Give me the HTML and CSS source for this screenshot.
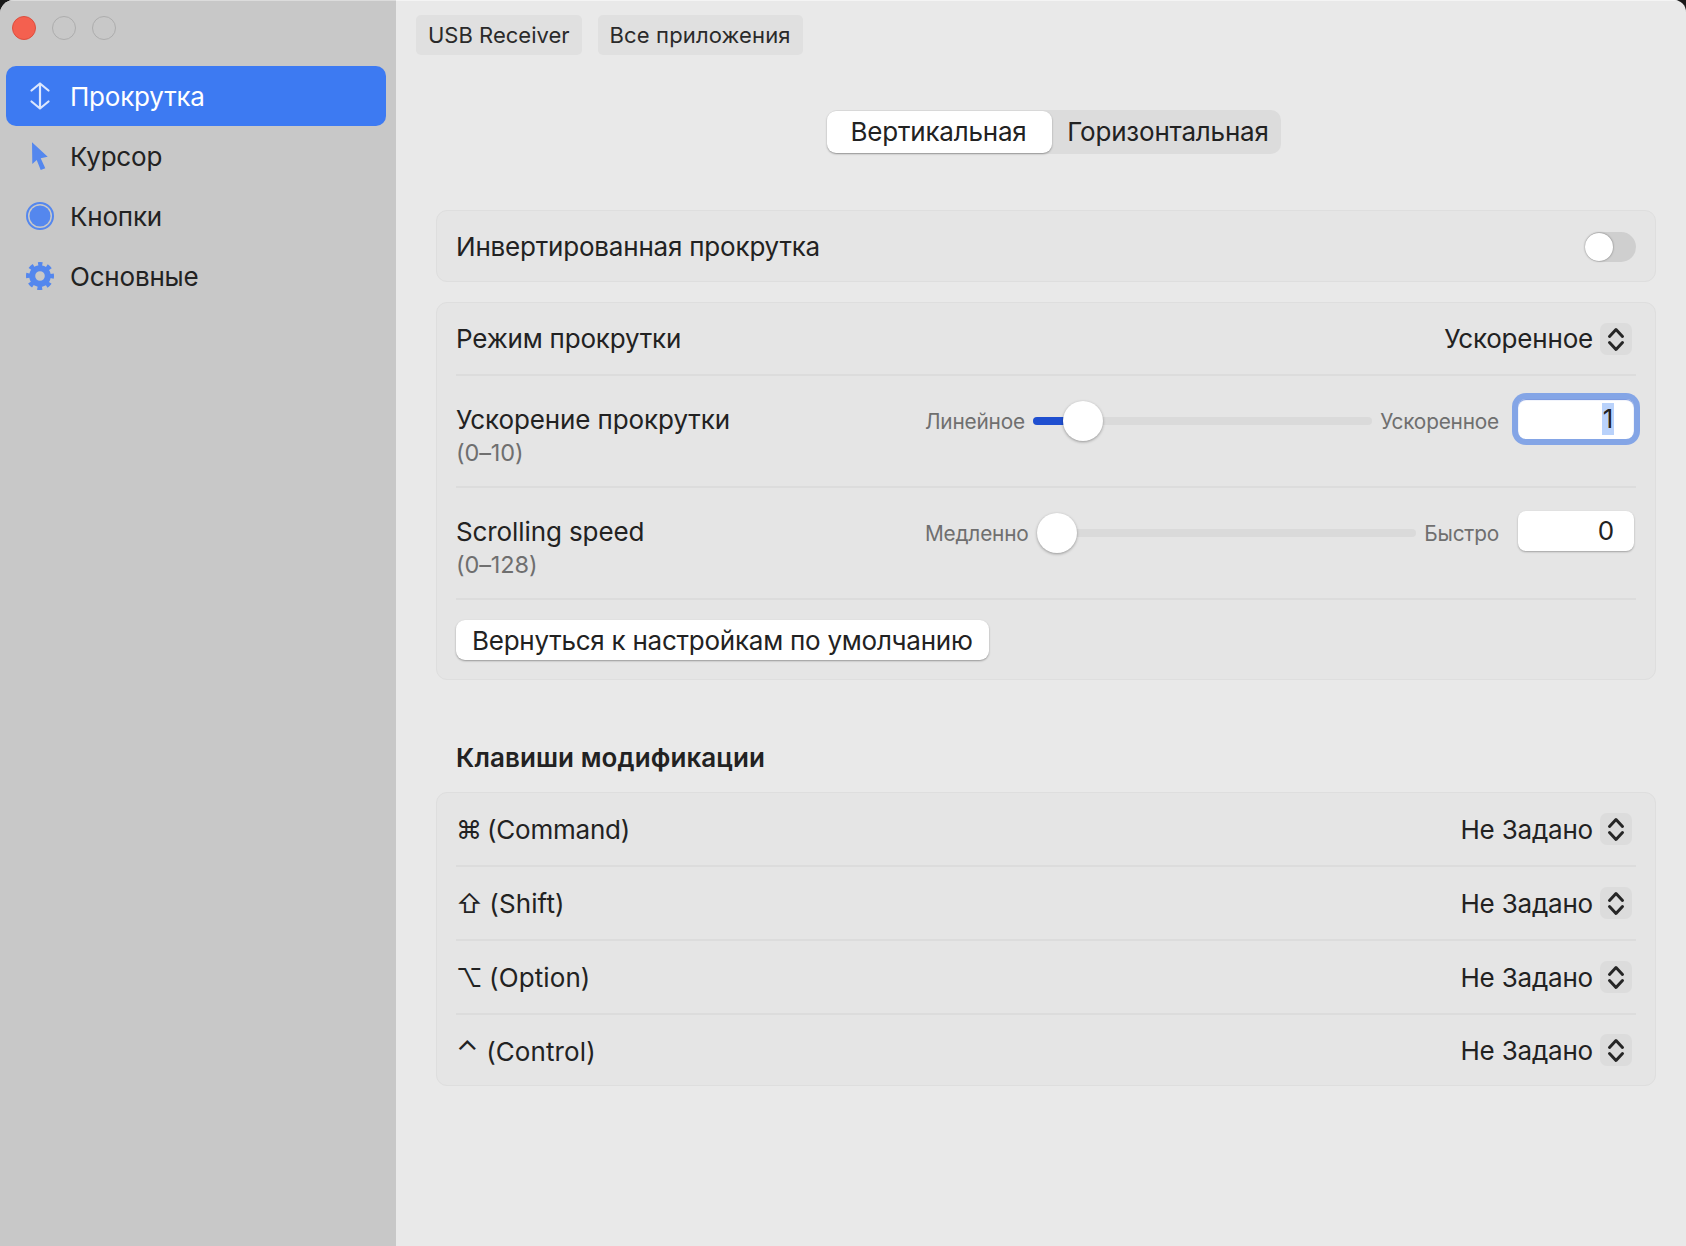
FILE: index.html
```html
<!DOCTYPE html>
<html lang="ru">
<head>
    <meta charset="UTF-8">
    <title>Настройки мыши</title>
    <link rel="stylesheet" href="styles.css">
</head>
<body>
    <div class="window">
        <aside class="sidebar">
            <div class="traffic">
                <span class="light light-close"></span>
                <span class="light"></span>
                <span class="light"></span>
            </div>
            <nav class="nav">
                <a class="nav-item active">
                    <svg class="nav-icon" viewBox="0 0 28 28" fill="none" stroke="#dbe6fd" stroke-width="2.2" stroke-linecap="round" stroke-linejoin="round">
                        <path d="M14 1.500v25M5.500 8.500 14 1.500 22.500 8.500M5.500 19.500l8.500 7 8.500-7"/>
                    </svg>
                    Прокрутка
                </a>
                <a class="nav-item">
                    <svg class="nav-icon" viewBox="0 0 28 28" fill="#5487ee">
                        <path d="M6 .3 21.700 14.700 14.700 16.300 19.300 26.300 14.700 28 10.700 18 6.300 22z"/>
                    </svg>
                    Курсор
                </a>
                <a class="nav-item">
                    <svg class="nav-icon" viewBox="0 0 28 28">
                        <circle cx="14" cy="14" r="13" fill="none" stroke="#5487ee" stroke-width="2"/>
                        <circle cx="14" cy="14" r="10.500" fill="#5487ee"/>
                    </svg>
                    Кнопки
                </a>
                <a class="nav-item">
                    <svg class="nav-icon" viewBox="0 0 28 28" fill="none" stroke="#5487ee">
                        <circle cx="14" cy="14" r="7.800" stroke-width="6"/>
                        <circle cx="14" cy="14" r="11.500" stroke-width="5" stroke-dasharray="4.600 4.432" stroke-dashoffset="2.300" transform="rotate(-90 14 14)"/>
                    </svg>
                    Основные
                </a>
            </nav>
        </aside>

        <main class="main">
            <div class="tabs">
                <button class="tab">USB Receiver</button>
                <button class="tab">Все приложения</button>
            </div>

            <div class="segmented">
                <span class="segment selected">Вертикальная</span>
                <span class="segment">Горизонтальная</span>
            </div>

            <section class="card first-card">
                <div class="row">
                    <span>Инвертированная прокрутка</span>
                    <span class="toggle"><span class="toggle-knob"></span></span>
                </div>
            </section>

            <section class="card">
                <div class="row">
                    <span>Режим прокрутки</span>
                    <div class="select">
                        Ускоренное
                        <span class="stepper">
                            <svg viewBox="0 0 32 32" fill="none" stroke="#262626" stroke-width="3" stroke-linecap="round" stroke-linejoin="round"><path d="M9.500 13.500 16 6.500 22.500 13.500M9.500 19.500 16 26.500 22.500 19.500"/></svg>
                        </span>
                    </div>
                </div>
                <div class="slider-row">
                    <div class="slider-title">
                        <div>Ускорение прокрутки</div>
                        <div class="range">(0–10)</div>
                    </div>
                    <div class="slider-controls">
                        <span class="hint">Линейное</span>
                        <div class="track">
                            <span class="track-fill"></span>
                            <span class="knob knob-accel"></span>
                        </div>
                        <span class="hint">Ускоренное</span>
                        <div class="number focused"><span class="selection">1</span></div>
                    </div>
                </div>
                <div class="slider-row">
                    <div class="slider-title">
                        <div>Scrolling speed</div>
                        <div class="range">(0–128)</div>
                    </div>
                    <div class="slider-controls">
                        <span class="hint">Медленно</span>
                        <div class="track">
                            <span class="knob"></span>
                        </div>
                        <span class="hint">Быстро</span>
                        <div class="number">0</div>
                    </div>
                </div>
                <div class="reset-row">
                    <button class="reset">Вернуться к настройкам по умолчанию</button>
                </div>
            </section>

            <h3 class="section-title">Клавиши модификации</h3>

            <section class="card">
                <div class="row mod-row">
                    <span><span class="mod-symbol">⌘</span> (Command)</span>
                    <div class="select">
                        Не Задано
                        <span class="stepper">
                            <svg viewBox="0 0 32 32" fill="none" stroke="#262626" stroke-width="3" stroke-linecap="round" stroke-linejoin="round"><path d="M9.500 13.500 16 6.500 22.500 13.500M9.500 19.500 16 26.500 22.500 19.500"/></svg>
                        </span>
                    </div>
                </div>
                <div class="row mod-row">
                    <span class="mod-label"><span class="mod-symbol">⇧</span> (Shift)</span>
                    <div class="select">
                        Не Задано
                        <span class="stepper">
                            <svg viewBox="0 0 32 32" fill="none" stroke="#262626" stroke-width="3" stroke-linecap="round" stroke-linejoin="round"><path d="M9.500 13.500 16 6.500 22.500 13.500M9.500 19.500 16 26.500 22.500 19.500"/></svg>
                        </span>
                    </div>
                </div>
                <div class="row mod-row">
                    <span class="mod-label"><span class="mod-symbol">⌥</span> (Option)</span>
                    <div class="select">
                        Не Задано
                        <span class="stepper">
                            <svg viewBox="0 0 32 32" fill="none" stroke="#262626" stroke-width="3" stroke-linecap="round" stroke-linejoin="round"><path d="M9.500 13.500 16 6.500 22.500 13.500M9.500 19.500 16 26.500 22.500 19.500"/></svg>
                        </span>
                    </div>
                </div>
                <div class="row mod-row">
                    <span class="mod-label"><span class="mod-symbol mod-control">⌃</span> (Control)</span>
                    <div class="select">
                        Не Задано
                        <span class="stepper">
                            <svg viewBox="0 0 32 32" fill="none" stroke="#262626" stroke-width="3" stroke-linecap="round" stroke-linejoin="round"><path d="M9.500 13.500 16 6.500 22.500 13.500M9.500 19.500 16 26.500 22.500 19.500"/></svg>
                        </span>
                    </div>
                </div>
            </section>
        </main>
    </div>
</body>
</html>
```

FILE: styles.css
```css
* {
    box-sizing: border-box;
}
html, body {
    margin: 0;
    height: 100%;
    background: #1a1a1a;
}
body {
    font-family: Inter, "Noto Sans", sans-serif;
    font-size: 26px;
    letter-spacing: -0.2px;
    color: #222;
}
.window {
    display: flex;
    height: 1246px;
    overflow: hidden;
    border-radius: 14px 12px 0 0;
    background: #e9e9e9;
}

/* sidebar */
.sidebar {
    width: 396px;
    flex-shrink: 0;
    background: #c8c8c8;
    border-top: 1px solid #dcdcdc;
    padding: 0 10px 0 6px;
}
.traffic {
    display: flex;
    gap: 16px;
    height: 65px;
    padding: 15px 0 0 6px;
}
.light {
    width: 24px;
    height: 24px;
    border-radius: 50%;
    border: 1px solid #adadad;
}
.light-close {
    background: #f4604f;
    border-color: #dc4e3e;
}
.nav-item {
    display: flex;
    align-items: center;
    gap: 16px;
    height: 60px;
    padding-left: 20px;
    border-radius: 10px;
}
.nav-item.active {
    background: #3d7af2;
    color: #fff;
}
.nav-icon {
    width: 28px;
    height: 28px;
    flex-shrink: 0;
}

/* main column */
.main {
    flex: 1;
    border-top: 1px solid #f4f4f4;
    padding: 14px 30px 0 40px;
}
.tabs {
    display: flex;
    gap: 16px;
    height: 40px;
    margin-left: -20px;
}
.tab {
    font: inherit;
    font-size: 22px;
    letter-spacing: 0;
    color: #2a2a2a;
    height: 40px;
    padding: 0 12px;
    border: none;
    border-radius: 5px;
    background: #e0e0e0;
}
.tab + .tab {
    letter-spacing: 0.15px;
}
.segmented {
    display: inline-flex;
    height: 44px;
    margin: 55px 0 0 391px;
    padding: 1px 0;
    border-radius: 10px;
    background: #dcdcdc;
    line-height: 38px;
}
.segment {
    display: flex;
    align-items: center;
    justify-content: center;
    width: 229px;
    padding-left: 3px;
}
.segment.selected {
    width: 225px;
    padding: 0 2px 0 0;
    border-radius: 9px;
    background: #fff;
    box-shadow: 0 1px 2px rgba(0, 0, 0, 0.35);
}

/* cards */
.card {
    margin-top: 20px;
    border: 1px solid #dedede;
    border-radius: 11px;
    background: #e5e5e5;
    padding: 0 19px;
}
.first-card {
    margin-top: 56px;
}
.row {
    display: flex;
    align-items: center;
    justify-content: space-between;
    height: 71px;
}
.first-card .row {
    height: 70px;
}
.row + .slider-row,
.slider-row + .slider-row,
.slider-row + .reset-row,
.row + .row {
    border-top: 2px solid #dcdcdc;
}
.row.mod-row {
    height: 74px;
}
.row.mod-row:first-child,
.row.mod-row:last-child {
    height: 72px;
}
.mod-label {
    letter-spacing: 0.1px;
}
.mod-symbol {
    margin-right: -2px;
}
.mod-label .mod-symbol {
    margin-right: -1px;
}
.mod-label .mod-symbol.mod-control {
    margin-right: 0;
    font-size: 29px;
}
.toggle {
    position: relative;
    width: 51px;
    height: 30px;
    margin-top: 2px;
    border-radius: 15px;
    background: #cfcfcf;
}
.toggle-knob {
    position: absolute;
    left: 0;
    top: 1px;
    width: 28px;
    height: 28px;
    border-radius: 50%;
    background: #fff;
    box-shadow: 0 0 2px rgba(0, 0, 0, 0.5);
}
.select {
    display: flex;
    align-items: center;
    gap: 7px;
    padding-right: 4px;
}
.stepper {
    display: flex;
    width: 32px;
    height: 32px;
    border-radius: 7px;
    background: #dcdcdc;
}
.slider-row {
    display: flex;
    height: 112px;
    padding-top: 23px;
}
.slider-title {
    width: 469px;
    flex-shrink: 0;
    padding-top: 5px;
    line-height: 32px;
    letter-spacing: -0.1px;
}
.range {
    margin-top: 1px;
    font-size: 23.500px;
    color: #6f6f6f;
}
.slider-controls {
    display: flex;
    align-items: center;
    flex: 1;
    height: 44px;
    padding-right: 2px;
}
.hint {
    font-size: 20.800px;
    color: #6f6f6f;
}
.track {
    position: relative;
    flex: 1;
    height: 8px;
    margin: 0 8px;
    border-radius: 4px;
    background: #dadada;
}
.track-fill {
    display: block;
    width: 34px;
    height: 8px;
    border-radius: 4px 0 0 4px;
    background: #1f4fd0;
}
.knob {
    position: absolute;
    left: 0;
    top: -16px;
    width: 40px;
    height: 40px;
    border-radius: 50%;
    background: #fff;
    box-shadow: 0 1px 3px rgba(0, 0, 0, 0.35);
}
.knob-accel {
    left: 30px;
}
.number {
    align-self: flex-start;
    width: 116px;
    height: 40px;
    margin-left: 19px;
    padding-right: 20px;
    line-height: 40px;
    text-align: right;
    border-radius: 8px;
    background: #fff;
    box-shadow: 0 1px 2px rgba(0, 0, 0, 0.3);
}
.number.focused {
    box-shadow: 0 0 0 6px #84a5e6, 0 1px 1px #6f8fdc inset;
}
.selection {
    display: inline-block;
    width: 12px;
    line-height: 32px;
    text-align: center;
    background: #b9d2fb;
}
.reset-row {
    height: 81px;
    padding-top: 20px;
}
.reset {
    font: inherit;
    letter-spacing: -0.25px;
    color: #222;
    height: 40px;
    padding: 0 16px;
    border: none;
    border-radius: 9px;
    background: #fff;
    box-shadow: 0 1px 2px rgba(0, 0, 0, 0.35);
}
.section-title {
    margin: 60px 0 16px 20px;
    font-size: 26px;
    letter-spacing: 0.1px;
    line-height: 36px;
    font-weight: 600;
}
.section-title + .card {
    margin-top: 0;
}
```
